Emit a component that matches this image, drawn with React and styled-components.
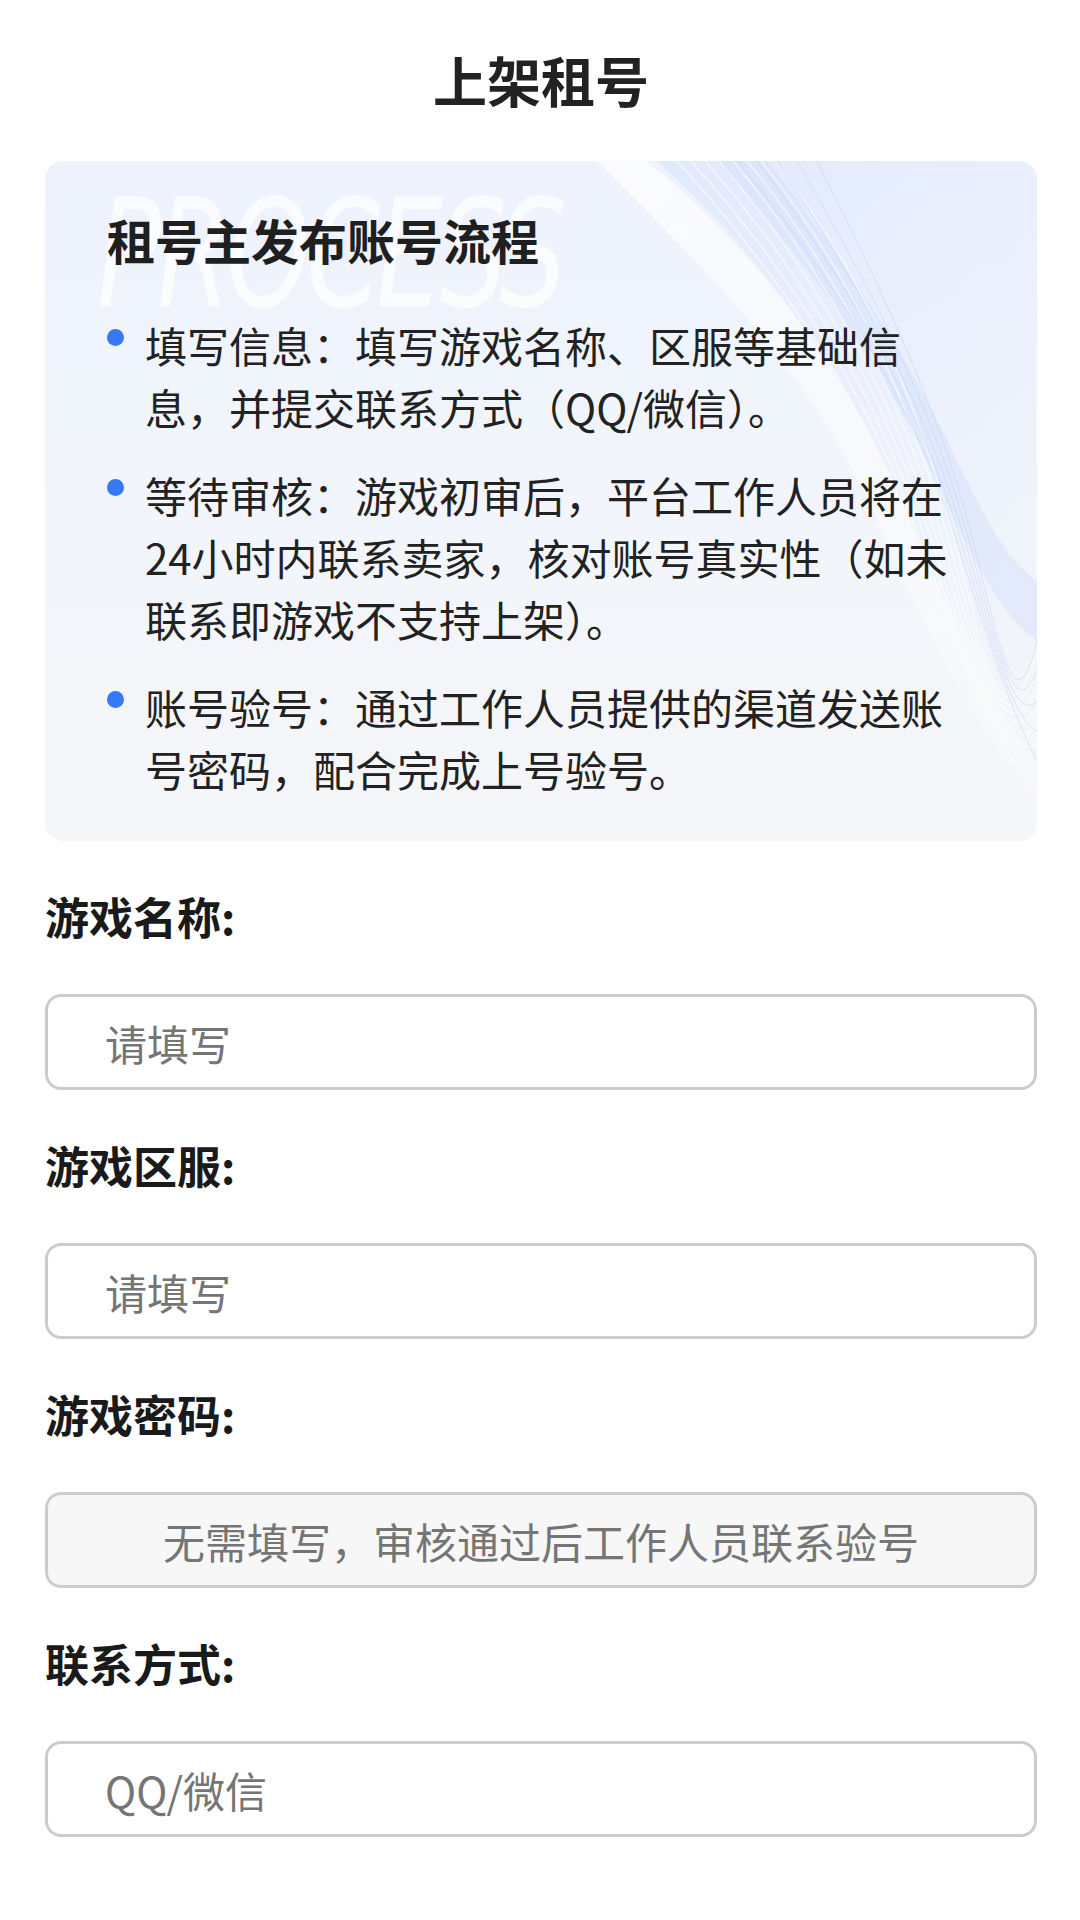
import React from 'react';
import styled, { createGlobalStyle } from 'styled-components';

const GlobalStyle = createGlobalStyle`
  * { box-sizing: border-box; }
  body {
    margin: 0;
    background: #ffffff;
    font-family: "Noto Sans CJK SC", "Noto Sans", sans-serif;
    color: #222222;
  }
  input { font-family: inherit; }
`;

const Page = styled.div`
  width: 1080px;
  min-height: 1920px;
  padding: 45px 43px 60px 45px;
  display: flex;
  flex-direction: column;
`;

const PageTitle = styled.h1`
  margin: 0;
  text-align: center;
  font-size: 54px;
  line-height: 70px;
  font-weight: 700;
  color: #222222;
`;

const ProcessCard = styled.section`
  position: relative;
  overflow: hidden;
  margin-top: 46px;
  border-radius: 18px;
  padding: 48px 67px 41px 62px;
  background: linear-gradient(180deg, #edf2fd 0%, #f2f5fb 50%, #f5f6f8 100%);
`;

const Waves = styled.svg`
  position: absolute;
  top: 0;
  right: 0;
  width: 500px;
  height: 680px;
  pointer-events: none;
`;

const Watermark = styled.div`
  position: absolute;
  left: 52px;
  top: 18px;
  font-family: "DejaVu Sans", sans-serif;
  font-size: 150px;
  line-height: 150px;
  font-style: italic;
  font-weight: 300;
  letter-spacing: -6px;
  color: rgba(255, 255, 255, 0.7);
  transform: scaleX(0.71);
  transform-origin: left top;
  pointer-events: none;
  user-select: none;
`;

const CardTitle = styled.h2`
  position: relative;
  margin: 0;
  font-size: 48px;
  line-height: 60px;
  font-weight: 700;
  color: #1f1f1f;
`;

const StepList = styled.ul`
  position: relative;
  list-style: none;
  margin: 45px 0 0;
  padding: 0;
  display: flex;
  flex-direction: column;
  gap: 26px;
`;

const StepItem = styled.li`
  display: flex;
  align-items: flex-start;
`;

const Dot = styled.span`
  flex: none;
  width: 17px;
  height: 17px;
  margin: 15px 21px 0 0;
  border-radius: 50%;
  background: #3579f6;
`;

const StepText = styled.p`
  margin: 0;
  flex: 1;
  font-size: 42px;
  line-height: 62px;
  color: #222222;
`;

const Field = styled.div`
  display: flex;
  flex-direction: column;
  margin-top: 45px;
`;

const Label = styled.label`
  font-size: 44px;
  line-height: 60px;
  font-weight: 700;
  color: #1a1a1a;
`;

const TextInput = styled.input`
  margin-top: 48px;
  width: 100%;
  height: 96px;
  border: 3px solid #cccccc;
  border-radius: 16px;
  padding: ${p => (p.$center ? '0' : '0 0 0 57px')};
  font-size: 42px;
  color: #333333;
  background: ${p => (p.$disabled ? '#f7f7f7' : '#ffffff')};
  text-align: ${p => (p.$center ? 'center' : 'left')};
  outline: none;

  &::placeholder {
    color: #757575;
  }
`;

const steps = [
  '填写信息：填写游戏名称、区服等基础信息，并提交联系方式（QQ/微信）。',
  '等待审核：游戏初审后，平台工作人员将在24小时内联系卖家，核对账号真实性（如未联系即游戏不支持上架）。',
  '账号验号：通过工作人员提供的渠道发送账号密码，配合完成上号验号。',
];

const fields = [
  { label: '游戏名称:', placeholder: '请填写' },
  { label: '游戏区服:', placeholder: '请填写' },
  { label: '游戏密码:', placeholder: '无需填写，审核通过后工作人员联系验号', disabled: true },
  { label: '联系方式:', placeholder: 'QQ/微信' },
];

const WaveDecor = () => (
  <Waves viewBox="0 0 500 680" preserveAspectRatio="none">
    <defs>
      <linearGradient id="waveA" x1="0" y1="0" x2="1" y2="1">
        <stop offset="0" stopColor="#c9d9fb" stopOpacity="0.7" />
        <stop offset="1" stopColor="#dfe8fb" stopOpacity="0.1" />
      </linearGradient>
      <linearGradient id="waveB" x1="0" y1="0" x2="1" y2="1">
        <stop offset="0" stopColor="#ffffff" stopOpacity="0.9" />
        <stop offset="1" stopColor="#ffffff" stopOpacity="0.2" />
      </linearGradient>
    </defs>
    <path d="M120 0 C 220 90, 300 200, 360 330 C 410 440, 450 520, 500 560 L 500 0 Z" fill="url(#waveA)" opacity="0.5" />
    <path d="M60 0 C 180 120, 280 220, 340 360 C 390 470, 430 560, 500 640 L 500 600 C 450 540, 410 450, 370 350 C 310 210, 220 90, 110 0 Z" fill="url(#waveB)" opacity="0.8" />
    <path d="M180 0 C 270 100, 350 210, 400 320 C 440 410, 470 460, 500 480 L 500 420 C 470 400, 450 360, 420 300 C 370 190, 300 90, 230 0 Z" fill="#d3e0fb" opacity="0.5" />
    {[0, 1, 2, 3, 4, 5, 6, 7].map(i => (
      <path
        key={i}
        d={`M${140 + i * 14} 0 C ${240 + i * 12} 110, ${320 + i * 8} 230, ${370 + i * 6} 360 S 460 600, 500 ${620 - i * 18}`}
        fill="none"
        stroke="#ffffff"
        strokeWidth="1.2"
        opacity="0.7"
      />
    ))}
    {[0, 1, 2, 3, 4].map(i => (
      <path
        key={`b${i}`}
        d={`M${200 + i * 20} 0 C ${300 + i * 10} 120, ${380 + i * 6} 250, ${420 + i * 4} 380 S 480 560, 500 ${600 - i * 30}`}
        fill="none"
        stroke="#bcd0f8"
        strokeWidth="1"
        opacity="0.5"
      />
    ))}
  </Waves>
);

const App = () => (
  <>
    <GlobalStyle />
    <Page>
      <PageTitle>上架租号</PageTitle>

      <ProcessCard>
        <WaveDecor />
        <Watermark aria-hidden="true">PROCESS</Watermark>
        <CardTitle>租号主发布账号流程</CardTitle>
        <StepList>
          {steps.map((text, i) => (
            <StepItem key={i}>
              <Dot />
              <StepText>{text}</StepText>
            </StepItem>
          ))}
        </StepList>
      </ProcessCard>

      {fields.map(f => (
        <Field key={f.label}>
          <Label>{f.label}</Label>
          <TextInput
            placeholder={f.placeholder}
            disabled={f.disabled}
            $disabled={f.disabled}
            $center={f.disabled}
          />
        </Field>
      ))}
    </Page>
  </>
);

export default App;
